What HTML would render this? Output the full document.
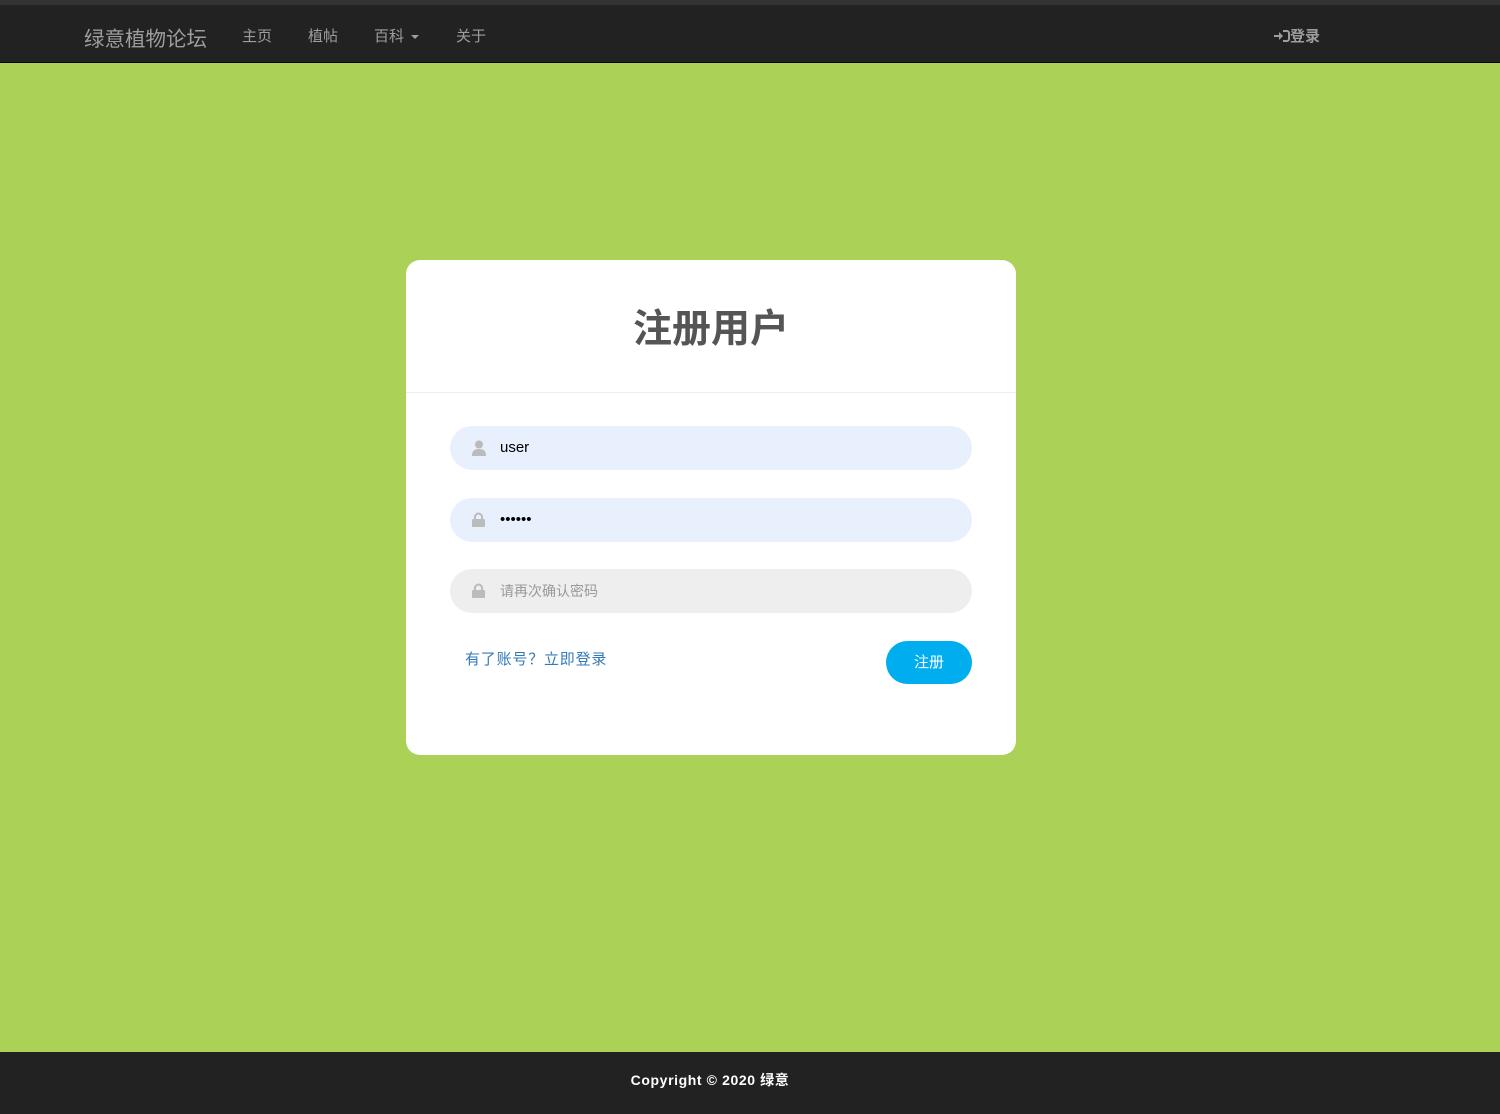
<!DOCTYPE html>
<html><head><meta charset="utf-8"><style>
*{margin:0;padding:0;box-sizing:border-box}
body{width:1500px;height:1114px;background:#acd157;font-family:"Liberation Sans","Noto Sans CJK SC",sans-serif;position:relative;overflow:hidden}
.top{position:absolute;left:0;top:0;width:1500px;height:63px;background:#222;border-top:5px solid #333;border-bottom:1px solid #080808}
.top span{position:absolute;color:#9d9d9d;font-size:15px;top:20px}
.brand{font-size:20.5px!important;top:17px!important;left:84px}
.card{position:absolute;left:406px;top:260px;width:610px;height:495px;background:#fff;border-radius:14px}
.card h1{position:absolute;top:38px;left:0;width:100%;text-align:center;font-size:39px;color:#555;font-weight:bold}
.hr{position:absolute;top:132px;left:0;width:100%;height:1px;background:#eee}
.in{position:absolute;left:44px;width:522px;height:44px;border-radius:22px;background:#e8f0fe;font-size:15px;color:#000;padding-left:50px;line-height:44px}
.in svg{position:absolute;left:22px;top:14px}
.link{position:absolute;left:59px;top:388px;color:#337ab7;font-size:15px;letter-spacing:0.8px}
.btn{position:absolute;left:480px;top:381px;width:86px;height:43px;border-radius:22px;background:#00aeef;color:#fff;font-size:15px;text-align:center;line-height:43px}
.foot{position:absolute;left:0;top:1052px;width:1500px;height:62px;background:#222;color:#fff;font-size:14px;font-weight:bold;letter-spacing:0.6px;text-align:center;line-height:56px;padding-right:80px}
</style></head><body>
<div class="top">
<span class="brand">绿意植物论坛</span>
<span style="left:242px">主页</span>
<span style="left:308px">植帖</span>
<span style="left:374px">百科 <span style="position:static;display:inline-block;width:0;height:0;border-left:4px solid transparent;border-right:4px solid transparent;border-top:4px solid #9d9d9d;vertical-align:middle;margin-left:3px"></span></span>
<span style="left:456px">关于</span>
<span style="left:1274px;font-weight:bold"><svg width="16" height="12" viewBox="0 0 16 12" style="vertical-align:-1px"><path d="M0 5h5V2l4 4-4 4V7H0z" fill="#9d9d9d"/><path d="M9 1h4a2 2 0 012 2v6a2 2 0 01-2 2H9" stroke="#9d9d9d" stroke-width="2" fill="none"/></svg>登录</span>
</div>
<div class="card">
<h1>注册用户</h1>
<div class="hr"></div>
<div class="in" style="top:166px"><svg width="14" height="16" viewBox="0 0 14 16"><circle cx="7" cy="4.5" r="4" fill="#bbb"/><path d="M0 16c0-5 2-7 7-7s7 2 7 7z" fill="#bbb"/></svg>user</div>
<div class="in" style="top:238px"><svg width="13" height="15" viewBox="0 0 13 15"><path d="M3 7V5a3.5 3.5 0 017 0v2" stroke="#bbb" stroke-width="2" fill="none"/><rect x="0" y="7" width="13" height="8" rx="1" fill="#bbb"/></svg>••••••</div>
<div class="in" style="top:309px;background:#eee;color:#999;font-size:14px"><svg width="13" height="15" viewBox="0 0 13 15"><path d="M3 7V5a3.5 3.5 0 017 0v2" stroke="#bbb" stroke-width="2" fill="none"/><rect x="0" y="7" width="13" height="8" rx="1" fill="#bbb"/></svg>请再次确认密码</div>
<div class="link">有了账号？立即登录</div>
<div class="btn">注册</div>
</div>
<div class="foot">Copyright © 2020 绿意</div>
</body></html>
